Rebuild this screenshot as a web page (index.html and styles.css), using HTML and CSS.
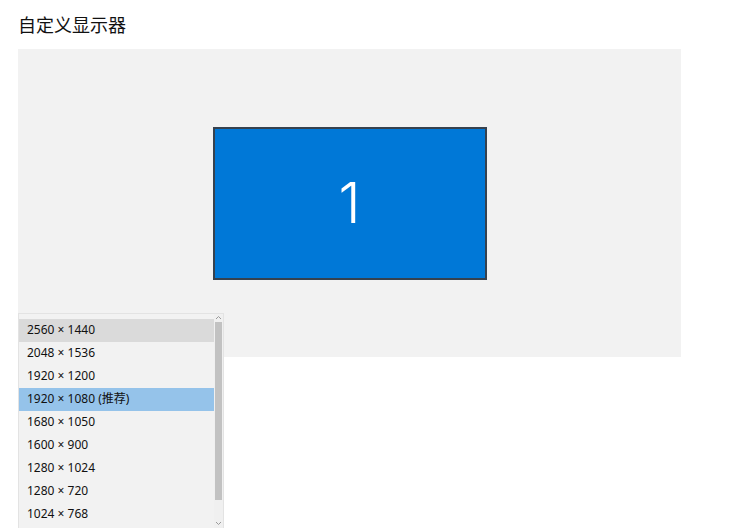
FILE: index.html
```html
<!DOCTYPE html>
<html lang="zh-CN">
<head>
<meta charset="utf-8">
<title>自定义显示器</title>
<link rel="stylesheet" href="styles.css">
</head>
<body>
<div class="page">
  <h1 class="title">自定义显示器</h1>
  <div class="stage">
    <div class="monitor"><span class="monitor-num">1</span></div>
  </div>
</div>
<div class="dropdown">
  <ul class="options">
    <li class="option hover">2560 × 1440</li>
    <li class="option">2048 × 1536</li>
    <li class="option">1920 × 1200</li>
    <li class="option selected">1920 × 1080 (推荐)</li>
    <li class="option">1680 × 1050</li>
    <li class="option">1600 × 900</li>
    <li class="option">1280 × 1024</li>
    <li class="option">1280 × 720</li>
    <li class="option">1024 × 768</li>
  </ul>
  <div class="scrollbar">
    <svg class="arrow" width="7" height="5" viewBox="0 0 7 5"><path d="M1 4 L3.5 1.5 L6 4" fill="none" stroke="#9a9a9a" stroke-width="1"/></svg>
    <div class="track"><div class="thumb"></div></div>
    <svg class="arrow" width="7" height="5" viewBox="0 0 7 5"><path d="M1 1 L3.5 3.5 L6 1" fill="none" stroke="#9a9a9a" stroke-width="1"/></svg>
  </div>
</div>
</body>
</html>
```
FILE: styles.css
```css
html, body {
  margin: 0;
  padding: 0;
  background: #ffffff;
  overflow: hidden;
}
body {
  font-family: "Noto Sans", "Noto Sans CJK SC", sans-serif;
  color: #000;
  width: 730px;
  height: 528px;
  position: relative;
}
.page {
  padding: 0 0 0 18px;
}
.title {
  margin: 0;
  padding-top: 11px;
  height: 49px;
  box-sizing: border-box;
  font-family: "Noto Sans CJK SC", sans-serif;
  font-weight: 400;
  font-size: 18px;
  line-height: 26px;
  color: #111;
}
.stage {
  width: 663px;
  height: 308px;
  background: #f2f2f2;
  display: flex;
  align-items: center;
  justify-content: center;
}
.monitor {
  width: 270px;
  height: 149px;
  background: #0078d7;
  border: 2px solid #36424f;
  display: flex;
  align-items: center;
  justify-content: center;
}
.monitor-num {
  font-family: "Inter", "Noto Sans", sans-serif;
  font-weight: 300;
  font-size: 56px;
  line-height: 1;
  color: #ffffff;
}
.dropdown {
  position: absolute;
  left: 18px;
  top: 313px;
  width: 206px;
  height: 216px;
  background: #f2f2f2;
  border: 1px solid #e3e3e3;
  box-sizing: border-box;
  display: flex;
}
.options {
  list-style: none;
  margin: 0;
  padding: 5px 0 0 0;
  flex: 1;
}
.option {
  height: 23px;
  line-height: 22px;
  padding-left: 8px;
  font-family: "Noto Sans", "Noto Sans CJK SC", sans-serif;
  font-size: 12px;
  color: #111;
  white-space: nowrap;
}
.option.hover {
  background: #dadada;
}
.option.selected {
  background: #95c3ea;
}
.scrollbar {
  width: 9px;
  display: flex;
  flex-direction: column;
  align-items: center;
  background: #f0f0f0;
}
.arrow {
  display: block;
  margin: 1px 0 2px;
}
.track {
  width: 100%;
  flex: 1;
  padding: 0 1px;
  box-sizing: border-box;
}
.thumb {
  width: 100%;
  height: 178px;
  background: #c2c2c2;
}
```
